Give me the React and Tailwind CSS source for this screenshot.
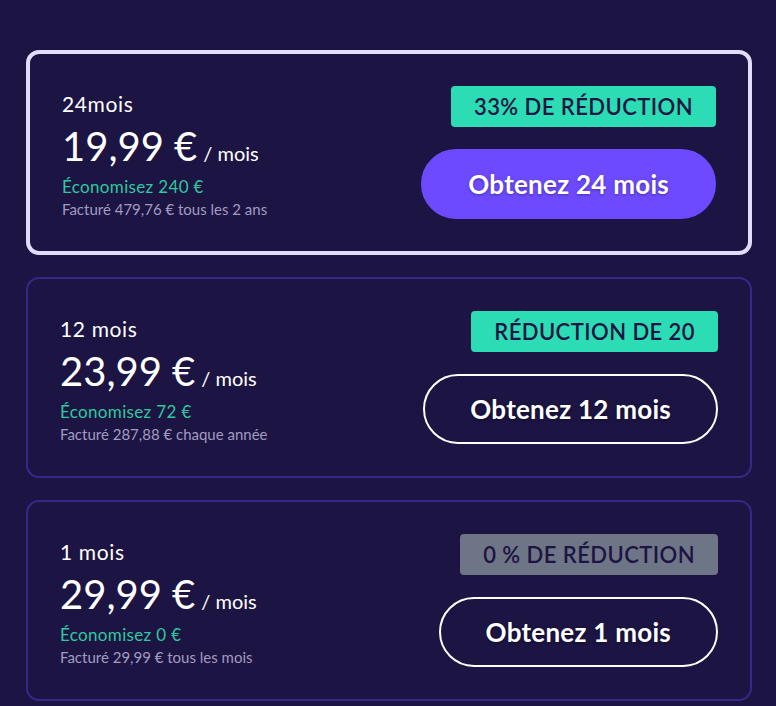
import React from 'react';

const plans = [
    {
        id: 24,
        title: '24mois',
        price: '19,99 €',
        saving: 'Économisez 240 €',
        billed: 'Facturé 479,76 € tous les 2 ans',
        badge: '33% DE RÉDUCTION',
        badgeClass: 'bg-[#2bdcb4]',
        cta: 'Obtenez 24 mois',
        featured: true,
    },
    {
        id: 12,
        title: '12 mois',
        price: '23,99 €',
        saving: 'Économisez 72 €',
        billed: 'Facturé 287,88 € chaque année',
        badge: 'RÉDUCTION DE 20',
        badgeClass: 'bg-[#2bdcb4]',
        cta: 'Obtenez 12 mois',
    },
    {
        id: 1,
        title: '1 mois',
        price: '29,99 €',
        saving: 'Économisez 0 €',
        billed: 'Facturé 29,99 € tous les mois',
        badge: '0 % DE RÉDUCTION',
        badgeClass: 'bg-[#6e7586]',
        cta: 'Obtenez 1 mois',
    },
];

const PlanCard = ({ plan }) => {
    const cardClass = plan.featured
        ? 'border-4 border-[#e2dcff]'
        : 'border-2 border-[#35288a]';

    const buttonClass = plan.featured
        ? 'bg-[#6d4aff] border-2 border-[#6d4aff]'
        : 'bg-transparent border-2 border-white';

    return (
        <div className={`rounded-[13px] bg-[#1c1442] p-8 flex items-center justify-between ${cardClass}`}>
            <div className="text-white">
                <div className="text-[21px] leading-[32px] tracking-[0.03em]">{plan.title}</div>
                <div className="flex items-baseline h-[53px]">
                    <span className="text-[40px] leading-[53px]">{plan.price}</span>
                    <span className="text-[20px] leading-none ml-[6px]">/ mois</span>
                </div>
                <div className="text-[17px] leading-[27px] tracking-[0.02em] text-[#2ec99e]">{plan.saving}</div>
                <div className="text-[15px] leading-[18px] text-[#a29bc2]">{plan.billed}</div>
            </div>

            <div className="flex flex-col items-end gap-[22px]">
                <span className={`rounded-[4px] px-[23px] h-[41px] flex items-center text-[22px] tracking-[0.02em] font-semibold text-[#1c1442] ${plan.badgeClass}`}>
                    {plan.badge}
                </span>
                <button
                    type="button"
                    className={`rounded-full h-[70px] px-[45px] text-[26px] tracking-[0.01em] font-bold text-white [text-shadow:0_1px_3px_rgba(0,0,0,0.35)] ${buttonClass}`}
                >
                    {plan.cta}
                </button>
            </div>
        </div>
    );
};

const App = () => {
    return (
        <div className="min-h-[706px] bg-[#1c1442] pt-[50px] pb-[5px] font-['Lato',sans-serif]">
            <div className="ml-[26px] w-[726px] flex flex-col gap-[22px]">
                {plans.map((plan) => (
                    <PlanCard key={plan.id} plan={plan} />
                ))}
            </div>
        </div>
    );
};

export default App;
